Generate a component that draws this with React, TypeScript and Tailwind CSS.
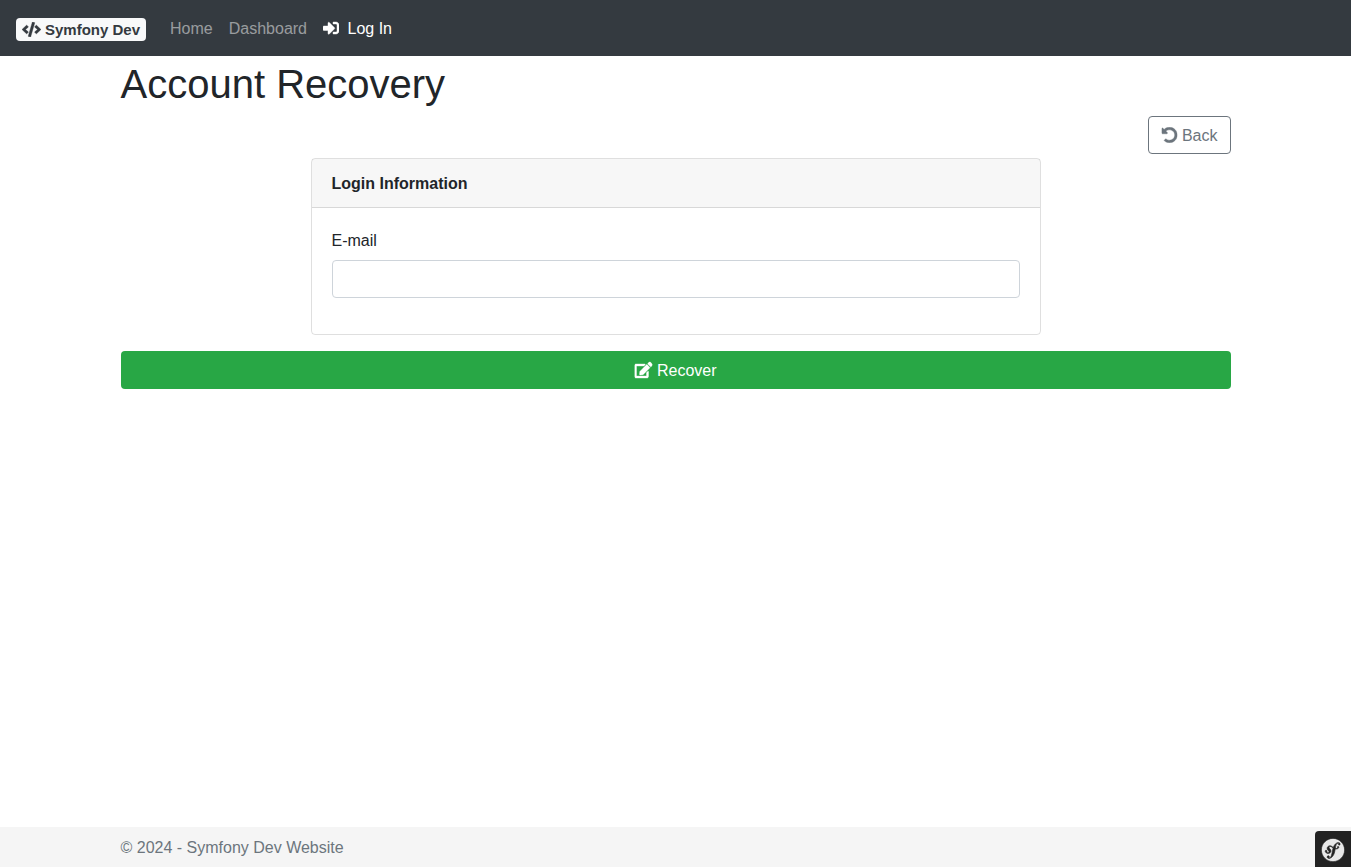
import React from "react";
import { FaCode, FaSignInAlt, FaUndoAlt, FaEdit, FaSymfony } from "react-icons/fa";

function Navbar() {
  return (
    <nav className="flex h-14 items-center bg-[#343a40] px-4">
      <a className="mt-[3px] mr-4 flex h-[23px] items-center gap-1 rounded bg-[#f8f9fa] px-1.5 text-[15px] leading-none font-bold text-[#343a40]">
        <FaCode className="h-[15px] w-[19px] stroke-[12px]" />
        <span>Symfony Dev</span>
      </a>
      <div className="flex items-center leading-6 text-white/50">
        <a className="px-2 pt-0.5">Home</a>
        <a className="px-2 pt-0.5">Dashboard</a>
        <a className="flex items-center px-2 text-white">
          <FaSignInAlt className="mr-[8.5px] size-4 stroke-[14px]" />
          <span className="pt-0.5">Log In</span>
        </a>
      </div>
    </nav>
  );
}

export default function App() {
  return (
    <div className="flex h-[867px] flex-col overflow-hidden bg-white font-['Liberation_Sans',sans-serif] text-base leading-6 text-[#212529]">
      <Navbar />
      <main className="ml-[120.5px] flex w-[1110px] flex-1 flex-col">
        <h1 className="mt-1 mb-2 text-[40px] leading-[48px]">Account Recovery</h1>
        <a className="flex h-[38px] items-center gap-[4.45px] self-end rounded border border-[#6c757d] px-3 text-[#6c757d]">
          <FaUndoAlt className="size-4 translate-x-[0.5px] stroke-[14px]" />
          <span className="pt-0.5">Back</span>
        </a>
        <section className="mt-1 h-[177px] w-[730px] self-center rounded border border-black/12.5">
          <h2 className="border-b border-black/12.5 bg-black/3 px-5 pt-[13px] pb-[11px] font-bold">Login Information</h2>
          <div className="px-5 pt-[21px]">
            <label htmlFor="email" className="mb-[7px] block">E-mail</label>
            <input id="email" type="email" className="block h-[38px] w-full rounded border border-[#ced4da] px-3" />
          </div>
        </section>
        <button className="mt-4 flex h-[38px] items-center justify-center gap-[4.45px] rounded bg-[#28a745] text-white">
          <FaEdit className="h-[18px] w-[18px] translate-x-[0.5px] stroke-[12px]" />
          <span className="pt-0.5">Recover</span>
        </button>
      </main>
      <footer className="flex h-10 items-center justify-between bg-[#f5f5f5] pl-[120.5px] text-[#6c757d]">
        <span className="pt-0.5">© 2024 - Symfony Dev Website</span>
        <button className="flex h-9 w-9 items-start justify-center self-end rounded-tl bg-[#222] pt-[7px] text-[#e8e8e8]" aria-label="Toolbar">
          <FaSymfony className="size-6 stroke-[#222] stroke-[14px]" />
        </button>
      </footer>
    </div>
  );
}
